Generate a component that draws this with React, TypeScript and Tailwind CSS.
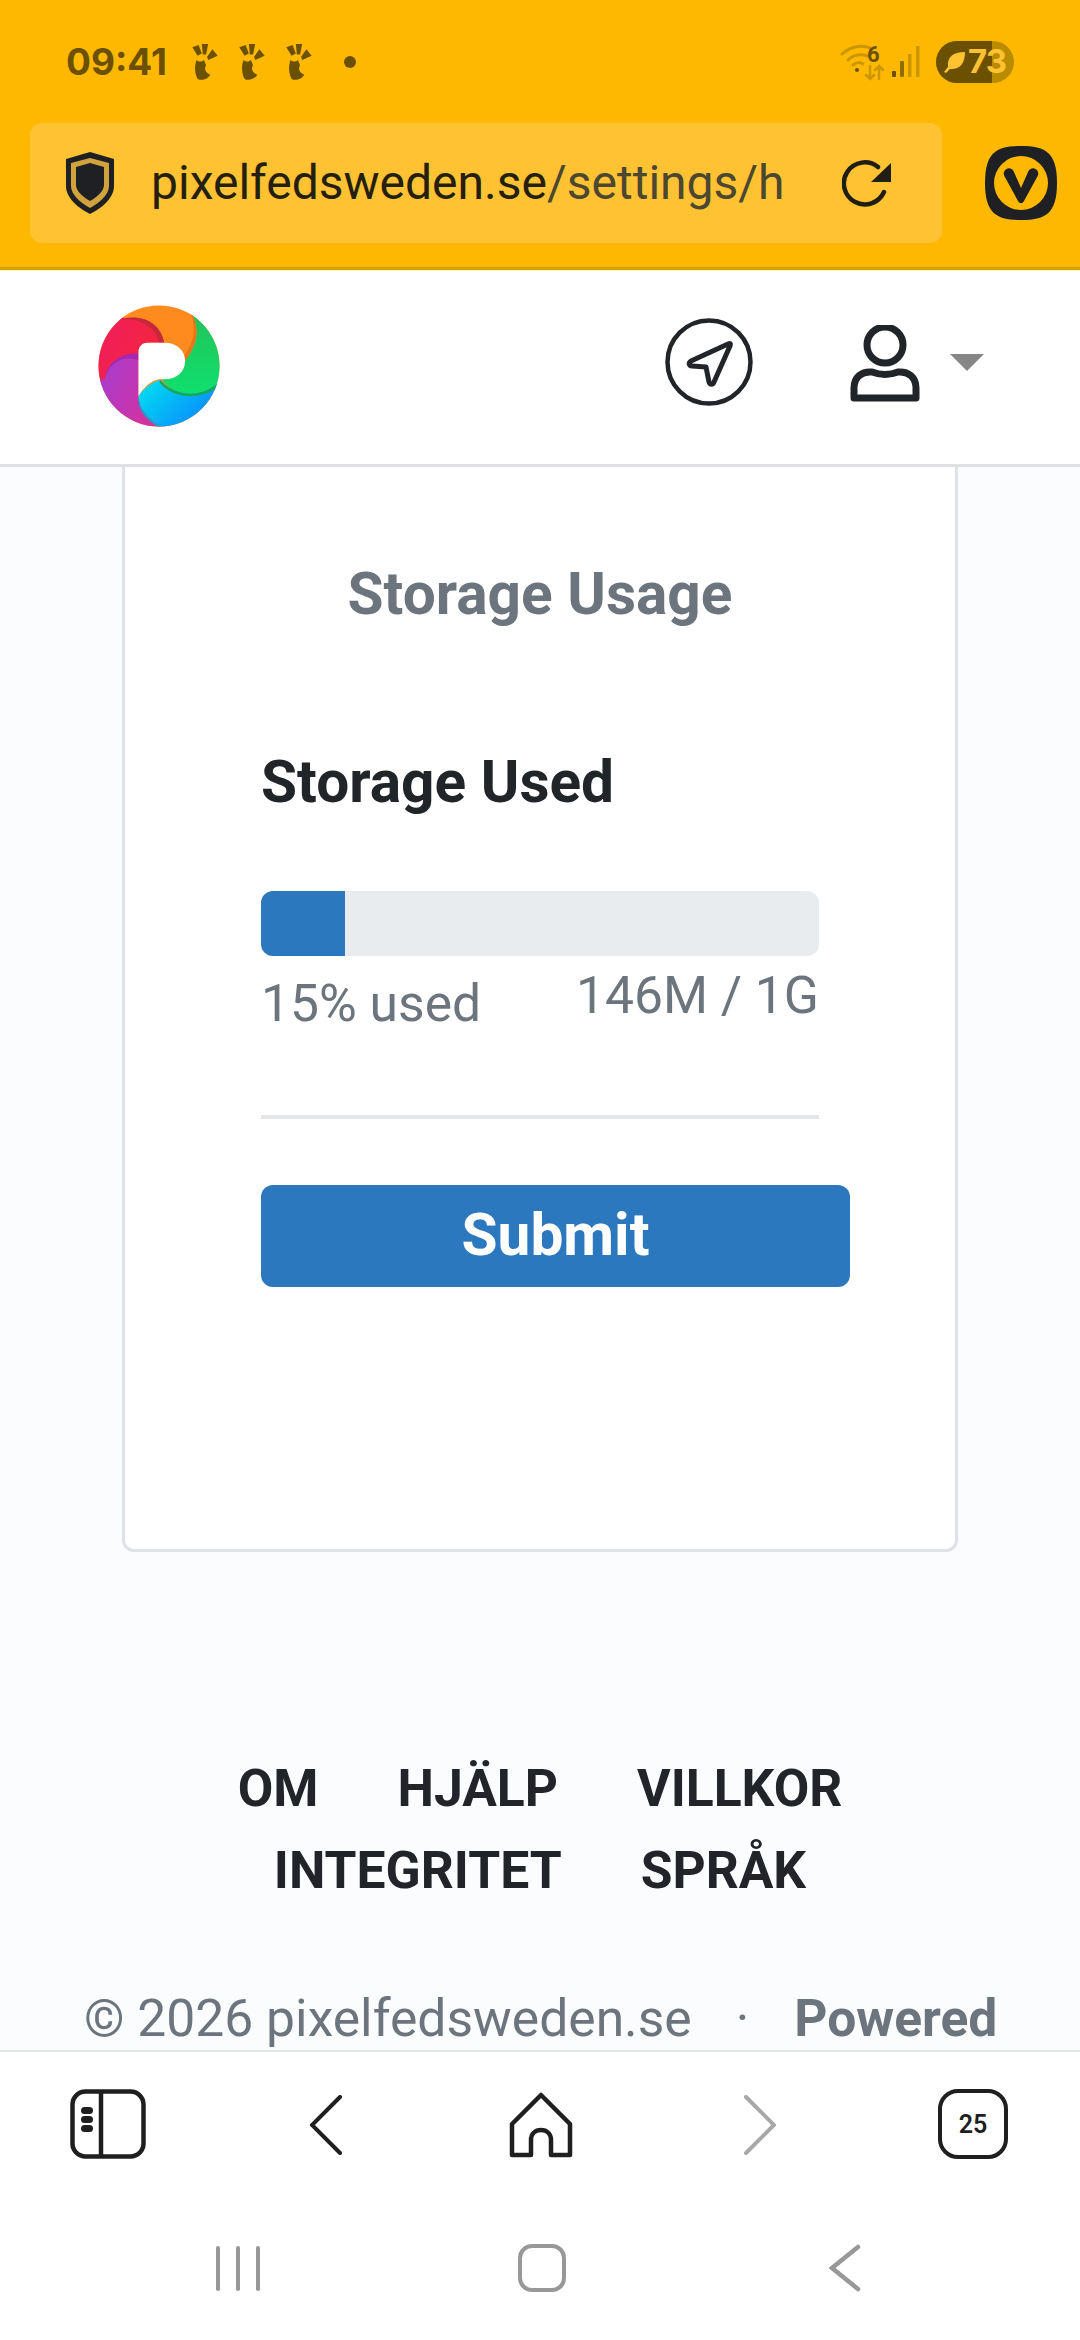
import React from "react";

const Foot = () => (
  <svg viewBox="0 0 24 34" className="w-[26px] h-[36px]" fill="#6b5000">
    <path d="M4 15 C5 16 8 18 11 15 L13 20 C11 23 12 27 17 29 C15 33 9 35 5 33 C2 28 2 20 4 15 Z" />
    <path d="M0 3 L6 1 L9 9 L5 11 Z" />
    <path d="M9 0 L15 0 L13 10 L10 10 Z" />
    <path d="M19 5 L24 11 L15 15 L14 12 Z" />
  </svg>
);

const Logo = () => (
  <svg viewBox="115 72 363 366" className="w-[122px] h-[122px]">
    <defs>
      <clipPath id="c"><circle cx="296.5" cy="255" r="181.5" /></clipPath>
      <linearGradient id="pu" x1="0" y1="0" x2="1" y2="0.4"><stop offset="0" stopColor="#9d3fd8" /><stop offset="1" stopColor="#d9309a" /></linearGradient>
      <linearGradient id="cy" x1="0" y1="0" x2="1" y2="0.6"><stop offset="0" stopColor="#00e4ee" /><stop offset="1" stopColor="#0a86ff" /></linearGradient>
      <linearGradient id="gr" x1="0" y1="0" x2="0" y2="1"><stop offset="0" stopColor="#22c25a" /><stop offset="1" stopColor="#0fe06c" /></linearGradient>
      <linearGradient id="re" x1="0" y1="0" x2="1" y2="0.4"><stop offset="0" stopColor="#ee1d62" /><stop offset="1" stopColor="#f4243f" /></linearGradient>
    </defs>
    <g clipPath="url(#c)">
      <rect x="100" y="60" width="400" height="400" fill="#ff8a1e" />
      <path d="M385 85 L500 85 L500 305 C455 352 350 362 305 295 L375 240 C412 190 425 140 385 85 Z" fill="url(#gr)" />
      <path d="M385 85 C425 140 412 190 375 240 L368 230 C400 190 415 140 385 85 Z" fill="#e8741a" />
      <path d="M95 310 L95 60 L170 60 L190 112 C255 100 302 130 312 185 L262 185 L235 240 C190 210 140 240 135 300 Z" fill="url(#re)" />
      <path d="M180 116 C250 96 302 130 312 185 L297 185 C288 140 240 108 180 116 Z" fill="#c42a3c" />
      <path d="M135 295 C140 240 190 212 235 232 L235 345 C240 390 280 420 335 445 L95 445 L95 300 Z" fill="url(#pu)" />
      <path d="M135 295 C140 240 190 212 235 218 L235 238 C190 220 145 245 135 295 Z" fill="#a827b0" />
      <path d="M235 345 C250 322 278 302 300 297 C350 352 430 352 485 296 L485 445 L325 445 C270 425 235 385 235 345 Z" fill="url(#cy)" />
      <path d="M300 297 C350 352 430 352 485 296 L485 310 C430 358 345 358 298 305 Z" fill="#16a85a" />
      <path d="M235 345 C235 385 270 425 325 445 L310 445 C262 425 228 385 235 345 Z" fill="#1aa2c8" />
    </g>
    <path d="M235 345 L235 212 C235 195 247 185 262 185 L312 185 C350 185 375 208 375 240 C375 272 350 295 312 295 L296 295 C270 300 250 322 235 345 Z" fill="#fff" />
  </svg>
);

export default function App() {
  return (
    <div className="w-[1080px] h-[2340px] flex flex-col overflow-hidden bg-white font-['Roboto',sans-serif]">
      {/* Browser top */}
      <header className="h-[270px] shrink-0 bg-[#ffb800] border-b-[3px] border-[#d2a200]">
        <div className="h-[123px] pl-[66px] pr-[66px] flex items-center">
          <span className="font-['Inter',sans-serif] font-bold text-[37px] leading-none text-[#6b5000] w-[126px]">09:41</span>
          <div className="flex gap-[21px]"><Foot /><Foot /><Foot /></div>
          <div className="w-[12px] h-[12px] rounded-full bg-[#6b5000] ml-[32px]" />
          <div className="ml-auto flex items-center">
            <svg viewBox="0 0 44 40" className="w-[44px] h-[40px]" fill="none" stroke="#cc9600" strokeWidth="3" strokeLinecap="round">
              <path d="M2 12 C12 3 24 3 30 6" />
              <path d="M8 18 C14 12 22 12 27 14" />
              <path d="M13 23 C16 20 20 20 23 22" />
              <circle cx="17" cy="28" r="2" fill="#6b5000" stroke="none" />
              <path d="M30 24 V37 M26 33 L30 37 L34 33 M39 37 V24 M35 28 L39 24 L43 28" strokeWidth="2.5" />
              <text x="27" y="20" fontSize="22" fontWeight="700" fill="#6b5000" stroke="none" fontFamily="Roboto">6</text>
            </svg>
            <svg viewBox="0 0 28 32" className="w-[28px] h-[32px] ml-[8px]">
              <rect x="0" y="25" width="4" height="6" rx="1" fill="#6b5000" />
              <rect x="8" y="15" width="4" height="16" rx="1" fill="#8f6c00" />
              <rect x="16" y="8" width="3.5" height="23" fill="#cc9600" />
              <rect x="24" y="0" width="3.5" height="31" fill="#cc9600" />
            </svg>
            <div className="ml-[16px] w-[78px] h-[42px] rounded-full bg-[#b98b00] overflow-hidden relative flex items-center">
              <div className="absolute left-0 top-0 bottom-0 w-[56px] bg-[#6b5000]" />
              <svg viewBox="0 0 24 24" className="relative w-[24px] h-[24px] ml-[7px]" fill="#ffc233">
                <path d="M22 2 C10 2 4 7 5 17 L1 22 L3 23 L7 19 C17 20 22 13 22 2 Z" />
              </svg>
              <span className="relative font-['Inter',sans-serif] font-bold text-[33px] leading-none text-[#ffc233] tracking-[-1px] ml-[1px]">73</span>
            </div>
          </div>
        </div>
        <div className="flex items-center">
          <div className="ml-[30px] w-[912px] h-[120px] rounded-[12px] bg-[#ffc233] flex items-center pl-[36px]">
            <svg viewBox="0 0 48 62" className="w-[48px] h-[62px] shrink-0">
              <path d="M24 0 L48 7 V34 C48 46 36 56 24 62 C12 56 0 46 0 34 V7 Z" fill="#1f2024" />
              <path d="M24 6 L43 11 V34 C43 43 33 51 24 56 C15 51 5 43 5 34 V11 Z" fill="#d0a33c" />
              <path d="M24 11 L38 15 L38 33 C38 39 31 45 24 49 C17 45 10 39 10 33 V15 Z" fill="#1f2024" />
            </svg>
            <div className="ml-[37px] w-[645px] whitespace-nowrap text-[48px] leading-none">
              <span className="text-[#241f10]">pixelfedsweden.se</span>
              <span className="text-[#4b4730]">/settings/h</span>
            </div>
            <svg viewBox="0 0 50 50" className="w-[50px] h-[50px] ml-[46px]" fill="none">
              <path d="M42 34 A21 21 0 1 1 36 9" stroke="#1f1d14" strokeWidth="4.5" strokeLinecap="round" />
              <path d="M49 5 V24 H29 Z" fill="#1f1d14" />
            </svg>
          </div>
          <svg viewBox="0 0 72 74" className="ml-[43px] w-[72px] h-[74px]">
            <path d="M36 0 C60 0 72 6 72 37 C72 68 60 74 36 74 C12 74 0 68 0 37 C0 6 12 0 36 0 Z" fill="#1f2024" />
            <circle cx="36" cy="37" r="27" fill="#ffb800" />
            <path d="M19 26 C21 21 27 21 29 26 L36 42 L43 26 C45 21 51 21 53 26 C54 29 52 31 51 33 L39 55 C37 58 35 58 33 55 L21 33 C20 31 18 29 19 26 Z" fill="#1f2024" />
          </svg>
        </div>
      </header>

      {/* Site nav */}
      <nav className="h-[197px] shrink-0 bg-white border-t border-t-[#fff6c2] border-b-[3px] border-b-[#dfe1e4] flex items-center">
        <div className="ml-[98px] -mt-[4px]"><Logo /></div>
        <svg viewBox="0 0 88 88" className="ml-[445px] -mt-[12px] w-[88px] h-[88px]" fill="none" stroke="#212529">
          <circle cx="44" cy="44" r="41.5" strokeWidth="4.5" />
          <path d="M63 26 L26 43 C23 45 24 48 27 48 L41 49 L44 64 C45 67 48 67 49 64 L65 28 C66 25 65 25 63 26 Z" strokeWidth="5" strokeLinejoin="round" />
        </svg>
        <svg viewBox="0 0 70 78" className="ml-[97px] -mt-[8px] w-[70px] h-[78px]" fill="none" stroke="#212529" strokeWidth="7">
          <circle cx="35" cy="20" r="18" />
          <path d="M4 73 V63 C4 52 12 46 22 47 C30 50 40 50 48 47 C58 46 66 52 66 63 V73 Z" strokeLinejoin="round" />
        </svg>
        <div className="ml-[30px] -mt-[10px] w-0 h-0 border-l-[17px] border-r-[17px] border-t-[17px] border-l-transparent border-r-transparent border-t-[#868686]" />
      </nav>

      {/* Content */}
      <main className="flex-1 min-h-0 overflow-hidden bg-[#fbfcfe]">
        <section className="ml-[122px] w-[836px] h-[1086px] -mt-[1px] bg-white border-[3px] border-t-0 border-[#dfe2e6] rounded-b-[12px] pl-[136px]">
          <h2 className="pt-[94px] -ml-[136px] text-center text-[#6c757d] font-bold text-[58.6px] leading-[68px]">Storage Usage</h2>
          <h3 className="mt-[120px] text-[#212529] font-bold text-[58.6px] leading-[68px]">Storage Used</h3>
          <div className="mt-[75px] w-[558px] h-[65px] rounded-[12px] bg-[#e9ecef] overflow-hidden">
            <div className="h-full w-[84px] bg-[#2c78bf]" />
          </div>
          <div className="w-[558px] flex justify-between items-start text-[#6c757d] text-[51.6px] leading-none whitespace-nowrap">
            <span className="pt-[22px]">15% used</span>
            <span className="pt-[14px]">146M / 1G</span>
          </div>
          <div className="mt-[85px] w-[558px] h-[4px] bg-[#e3e5e7]" />
          <button className="mt-[66px] w-[589px] h-[102px] rounded-[12px] bg-[#2c78bf] text-white font-bold text-[58.6px] leading-none">Submit</button>
        </section>

        <div className="mt-[196px] flex flex-col items-center text-[#212529] font-bold text-[51.6px] leading-[82px] whitespace-nowrap">
          <div className="flex gap-[79px]">
            <span>OM</span><span>HJÄLP</span><span>VILLKOR</span>
          </div>
          <div className="flex gap-[79px]">
            <span>INTEGRITET</span><span>SPRÅK</span>
          </div>
        </div>

        <div className="mt-[74px] pl-[84px] flex text-[#6c757d] text-[51.6px] leading-[66px] whitespace-nowrap">
          <span>© 2026 pixelfedsweden.se</span>
          <span className="ml-[44px]">·</span>
          <span className="ml-[45px] font-bold">Powered</span>
        </div>
      </main>

      {/* Browser bottom */}
      <div className="h-[148px] shrink-0 bg-white border-t-2 border-[#e3e5e7] flex items-start pt-[37px]">
        <svg viewBox="0 0 76 70" className="ml-[70px] w-[76px] h-[70px]" fill="none" stroke="#1f1f1f" strokeWidth="4.5">
          <rect x="2.5" y="2.5" width="71" height="65" rx="13" />
          <path d="M31 2.5 V67.5" />
          <g fill="#1f1f1f" stroke="none">
            <rect x="11" y="18" width="12" height="7" rx="3.5" /><rect x="11" y="27" width="12" height="7" rx="3.5" /><rect x="11" y="36" width="12" height="7" rx="3.5" />
          </g>
        </svg>
        <svg viewBox="0 0 32 60" className="ml-[164px] mt-[6px] w-[32px] h-[60px]" fill="none" stroke="#1f1f1f" strokeWidth="4" strokeLinecap="round">
          <path d="M30 2 L2 30 L30 58" />
        </svg>
        <svg viewBox="0 0 64 66" className="ml-[167px] mt-[3px] w-[64px] h-[66px]" fill="none" stroke="#1f1f1f" strokeWidth="4.5" strokeLinejoin="round">
          <path d="M32 3 L61 32 V63 H42 V48 C42 42 38 38 32 38 C26 38 22 42 22 48 V63 H3 V32 Z" />
        </svg>
        <svg viewBox="0 0 32 60" className="ml-[171px] mt-[6px] w-[32px] h-[60px]" fill="none" stroke="#a8a8a8" strokeWidth="4" strokeLinecap="round">
          <path d="M2 2 L30 30 L2 58" />
        </svg>
        <div className="ml-[162px] w-[70px] h-[70px] rounded-[20px] border-[4.5px] border-[#1f1f1f] flex items-center justify-center text-[#1f1f1f] font-semibold text-[25px] leading-none">25</div>
      </div>

      {/* System nav */}
      <div className="h-[143px] shrink-0 -mt-[1px] bg-white flex items-start pt-[47px]">
        <div className="ml-[216px] mt-[2px] flex gap-[16px]">
          <div className="w-[4px] h-[45px] rounded-[2px] bg-[#989898]" />
          <div className="w-[4px] h-[45px] rounded-[2px] bg-[#989898]" />
          <div className="w-[4px] h-[45px] rounded-[2px] bg-[#989898]" />
        </div>
        <div className="ml-[258px] w-[48px] h-[48px] rounded-[14px] border-[4.5px] border-[#989898]" />
        <svg viewBox="0 0 32 48" className="ml-[263px] w-[32px] h-[48px]" fill="none" stroke="#989898" strokeWidth="4.5" strokeLinecap="round">
          <path d="M29 3 L3 24 L29 45" />
        </svg>
      </div>
    </div>
  );
}
